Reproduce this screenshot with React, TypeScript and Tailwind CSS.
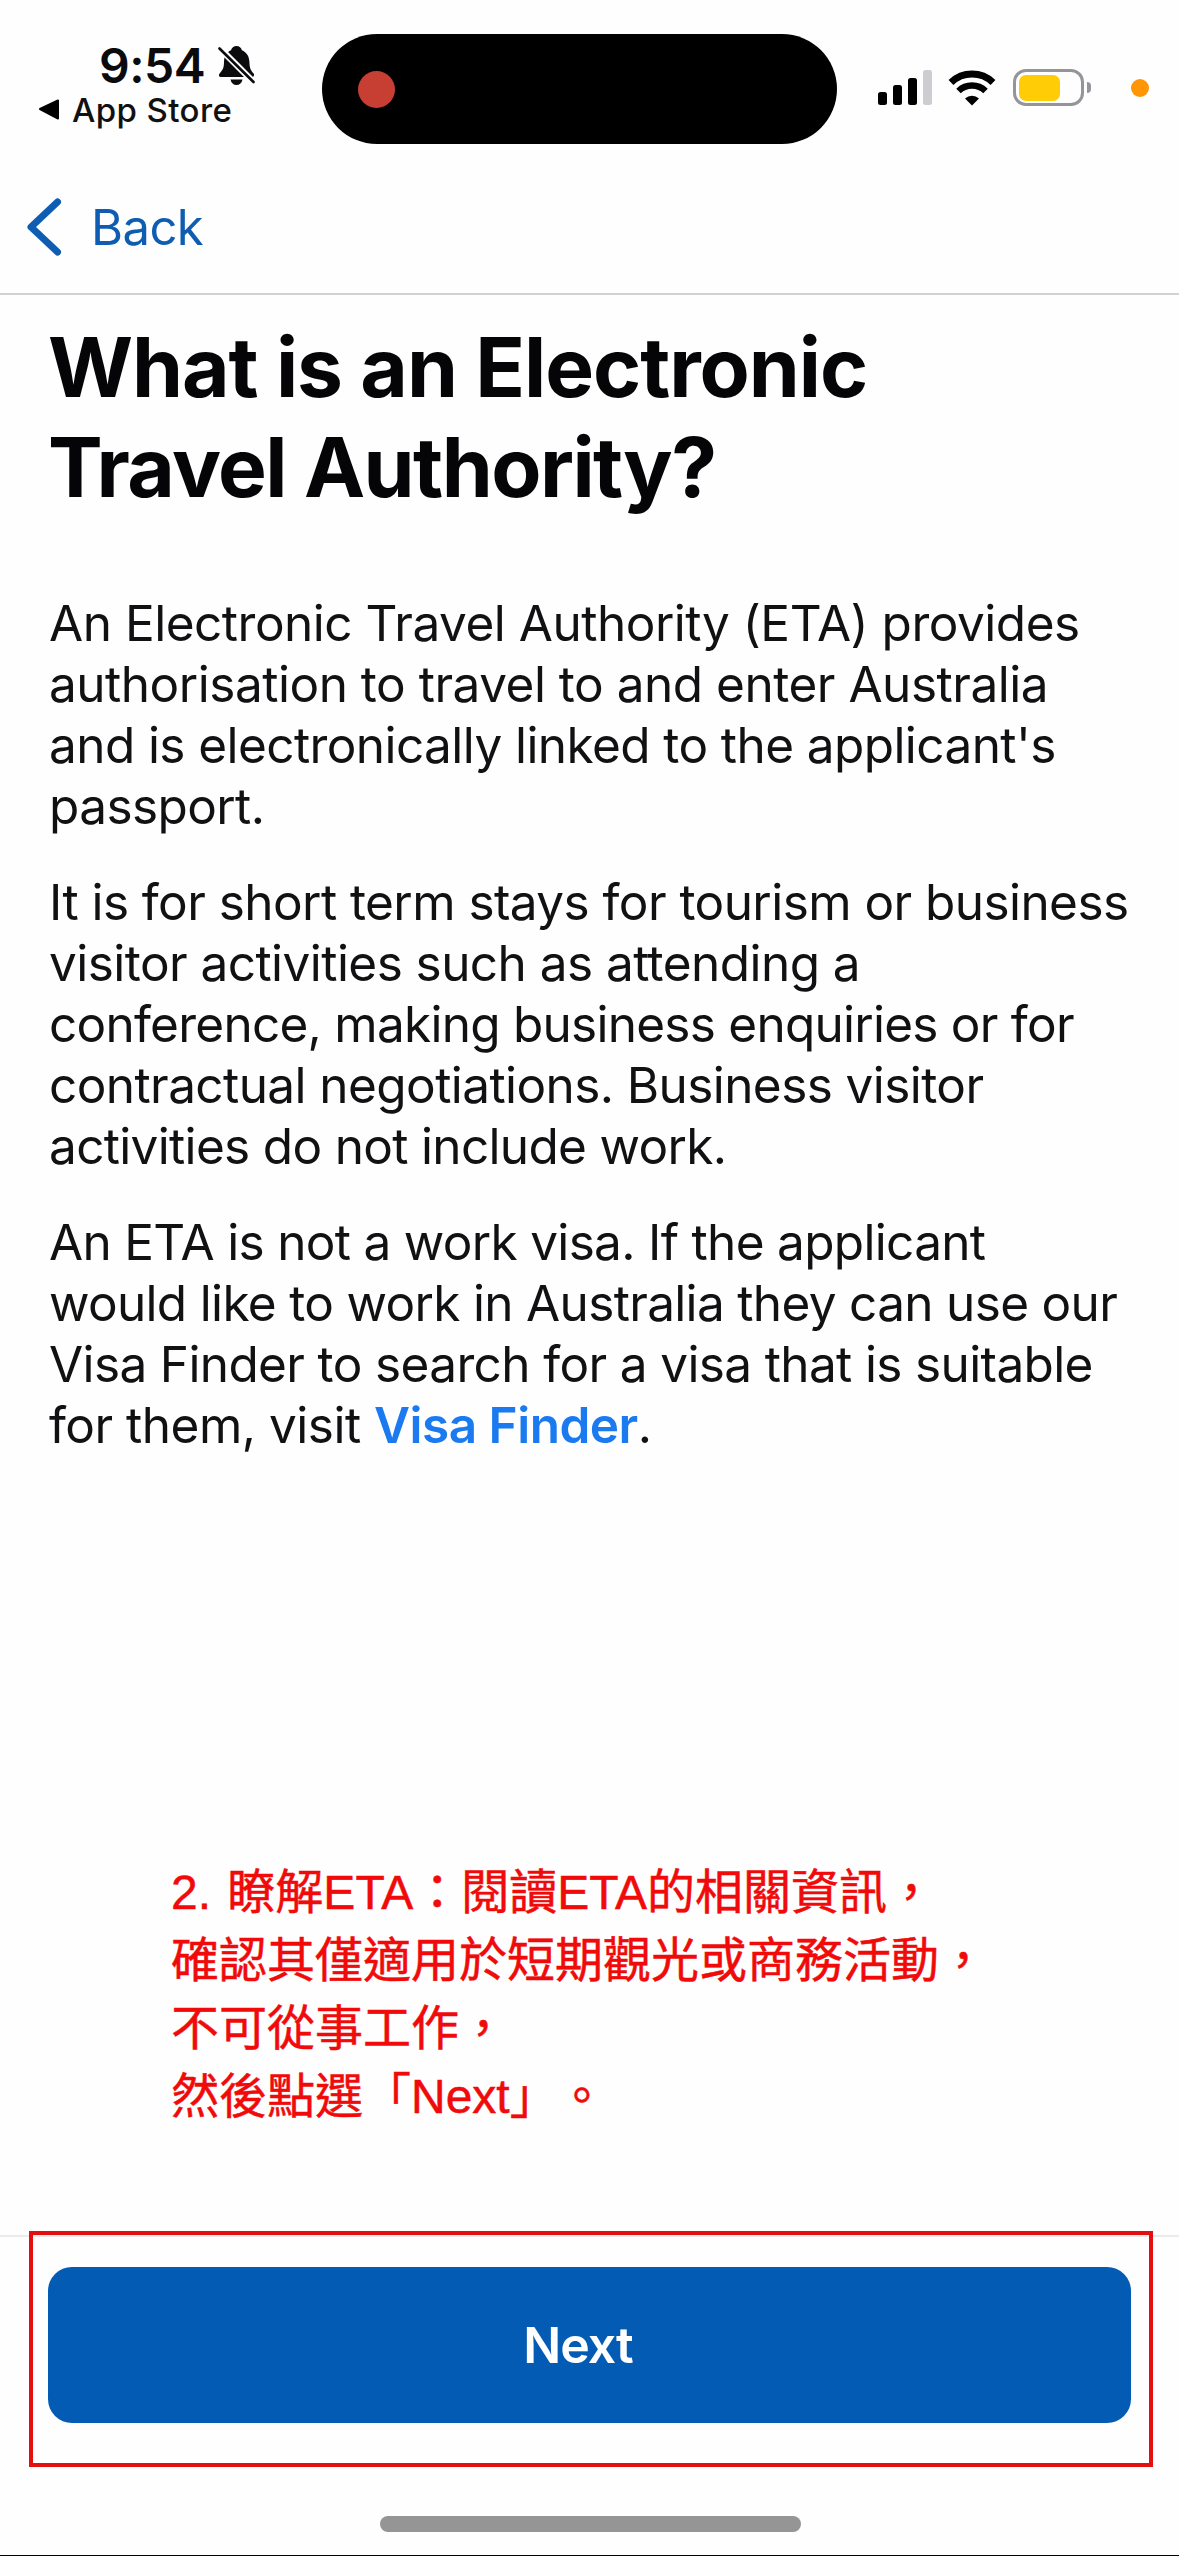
import type { ReactNode } from "react";

type TextLine = { text: string; tracking: string };

const introParagraph: TextLine[] = [
  { text: "An Electronic Travel Authority (ETA) provides", tracking: "tracking-[-0.48px]" },
  { text: "authorisation to travel to and enter Australia", tracking: "tracking-[-0.48px]" },
  { text: "and is electronically linked to the applicant's", tracking: "tracking-[-0.58px]" },
  { text: "passport.", tracking: "tracking-[-0.6px]" },
];

const usageParagraph: TextLine[] = [
  { text: "It is for short term stays for tourism or business", tracking: "tracking-[-0.56px]" },
  { text: "visitor activities such as attending a", tracking: "tracking-[-0.55px]" },
  { text: "conference, making business enquiries or for", tracking: "tracking-[-0.74px]" },
  { text: "contractual negotiations. Business visitor", tracking: "tracking-[-0.58px]" },
  { text: "activities do not include work.", tracking: "tracking-[-0.67px]" },
];

const visaParagraph: TextLine[] = [
  { text: "An ETA is not a work visa. If the applicant", tracking: "tracking-[-0.68px]" },
  { text: "would like to work in Australia they can use our", tracking: "tracking-[-0.67px]" },
  { text: "Visa Finder to search for a visa that is suitable", tracking: "tracking-[-0.63px]" },
];

const noteLines = [
  "2. 瞭解ETA：閱讀ETA的相關資訊，",
  "確認其僅適用於短期觀光或商務活動，",
  "不可從事工作，",
  "然後點選「Next」。",
];

function BellSlashIcon() {
  return (
    <svg width="38" height="42" viewBox="0 0 38 42" className="shrink-0">
      <path
        d="M18.5 1c2.8 0 4.8 1.7 5.4 4.2 4.8 2 7.300 6.200 7.500 11.600.2 6 .9 8.200 4.200 11.800.9 1 .7 3.400-1.500 3.400H3c-2.200 0-2.700-2.200-1.400-3.600C5.200 24.700 5.900 22.500 6 16.800c.1-5.400 2.400-9.600 7-11.600C13.700 2.700 15.700 1 18.500 1z"
        fill="#0b0b0d"
      />
      <path d="M12.500 34.500h12c-.7 3.600-2.900 5.500-6 5.500s-5.300-1.900-6-5.500z" fill="#0b0b0d" />
      <path d="M-1 .5L38 39.500" stroke="#fefefe" strokeWidth="6.500" />
      <path d="M1.500 3.500L35.500 37" stroke="#0b0b0d" strokeWidth="2.600" strokeLinecap="round" />
    </svg>
  );
}

function WifiIcon() {
  return (
    <svg width="48" height="36" viewBox="0 0 48 36" className="shrink-0">
      <path d="M3 12.500a30.500 30.500 0 0 1 42 0" fill="none" stroke="#000" strokeWidth="7" />
      <path d="M10.500 21a19.500 19.500 0 0 1 27 0" fill="none" stroke="#000" strokeWidth="6.500" />
      <path d="M17 28.500a10.500 10.500 0 0 1 14 0L24 35.500z" fill="#000" />
    </svg>
  );
}

function StatusBar() {
  return (
    <header className="flex h-[178px] shrink-0 items-start">
      <div className="w-[322px] shrink-0 pt-[45px] pl-[38px]">
        <div className="flex h-[42px] items-center pl-[61px]">
          <span className="w-[119px] text-[48px] leading-[42px] font-semibold tracking-[-0.5px] text-[#0b0b0d]">9:54</span>
          <BellSlashIcon />
        </div>
        <div className="mt-[3px] flex h-[40px] items-center">
          <svg width="22" height="22" viewBox="0 0 22 22" className="shrink-0">
            <path d="M2 10L20 1.500v18z" fill="#000" stroke="#000" strokeWidth="2" strokeLinejoin="round" />
          </svg>
          <span className="ml-[12px] text-[33px] leading-[40px] font-medium tracking-[0.4px] whitespace-nowrap text-[#111]">App Store</span>
        </div>
      </div>
      <div className="mt-[34px] flex h-[110px] w-[515px] shrink-0 items-center rounded-full bg-black pl-[36px]">
        <div className="size-[37px] rounded-full bg-[#c63f32]" />
      </div>
      <div className="mt-[69px] ml-[41px] flex h-[37px] items-center">
        <div className="flex h-[35px] items-end gap-[6px]">
          <div className="h-[13px] w-[9px] rounded-[2.5px] bg-black" />
          <div className="h-[20px] w-[9px] rounded-[2.5px] bg-black" />
          <div className="h-[27px] w-[9px] rounded-[2.5px] bg-black" />
          <div className="h-[35px] w-[9px] rounded-[2.5px] bg-[#cfccd1]" />
        </div>
        <div className="ml-[16px]">
          <WifiIcon />
        </div>
        <div className="ml-[17px] flex h-[37px] w-[71px] items-center rounded-[13px] border-[3px] border-[#96949a] pl-[3px]">
          <div className="h-[26px] w-[41px] rounded-[7px] bg-[#ffcc05]" />
        </div>
        <div className="ml-[3px] h-[11px] w-[4px] rounded-r-full bg-[#96949a]" />
        <div className="ml-[40px] size-[18px] rounded-full bg-[#ff9606]" />
      </div>
    </header>
  );
}

function NavBar() {
  return (
    <nav className="flex h-[117px] shrink-0 items-start border-b-2 border-[#d2d2d3] pt-[20px] pl-[27px]">
      <svg width="36" height="58" viewBox="0 0 36 58" className="shrink-0">
        <path d="M30.500 4L4 29l26.500 25" fill="none" stroke="#0f5db3" strokeWidth="7" strokeLinecap="round" strokeLinejoin="round" />
      </svg>
      <span className="ml-[28px] text-[49px] leading-[60px] tracking-[-0.6px] text-[#0f5db3]">Back</span>
    </nav>
  );
}

function Line({ className = "", children }: { className?: string; children: ReactNode }) {
  return <span className={`block whitespace-nowrap ${className}`}>{children}</span>;
}

function Paragraph({ lines, children }: { lines: TextLine[]; children?: ReactNode }) {
  return (
    <p className="text-[49.5px] leading-[61px] text-[#111113]">
      {lines.map((line) => (
        <Line key={line.text} className={line.tracking}>
          {line.text}
        </Line>
      ))}
      {children}
    </p>
  );
}

export default function App() {
  return (
    <div className="flex h-[2556px] w-[1179px] flex-col overflow-hidden border-b border-black bg-[#fefefe] font-['Inter',sans-serif]">
      <StatusBar />
      <NavBar />

      <main className="flex-1 pt-[23px] pl-[49px]">
        <h1 className="-ml-px text-[82px] leading-[100px] font-bold text-[#050507]">
          <Line className="tracking-[-1.05px]">What is an Electronic</Line>
          <Line className="tracking-[-1.55px]">Travel Authority?</Line>
        </h1>
        <div className="mt-[75px] flex flex-col gap-[35px]">
          <Paragraph lines={introParagraph} />
          <Paragraph lines={usageParagraph} />
          <Paragraph lines={visaParagraph}>
            <Line className="tracking-[-0.5px]">
              for them, visit <a className="font-semibold text-[#1b7af0]">Visa Finder</a>.
            </Line>
          </Paragraph>
        </div>
        <div
          lang="zh-Hant"
          className="mt-[403px] pl-[122px] font-['Liberation_Sans','Noto_Sans_CJK_TC',sans-serif] text-[48px] leading-[68px] text-[#f00a0a] [text-spacing-trim:space-all] [word-spacing:3px] [-webkit-text-stroke:0.5px_#f00a0a]"
        >
          {noteLines.map((line) => (
            <Line key={line}>{line}</Line>
          ))}
        </div>
      </main>

      <footer className="relative h-[320px] shrink-0 border-t-2 border-[#ebebec] pt-[30px]">
        <button className="mx-auto flex h-[156px] w-[1083px] items-center justify-center rounded-[24px] bg-[#035bb4] pr-[23px] text-[50px] font-semibold tracking-[-1px] text-white">
          Next
        </button>
        <div className="mt-[93px] ml-[380px] h-[16px] w-[421px] rounded-full bg-[#959595]" />
        {/* highlight frame drawn over the footer edge */}
        <div className="absolute -top-[6px] left-[29px] h-[236px] w-[1124px] border-4 border-[#e30f10]" />
      </footer>
    </div>
  );
}
